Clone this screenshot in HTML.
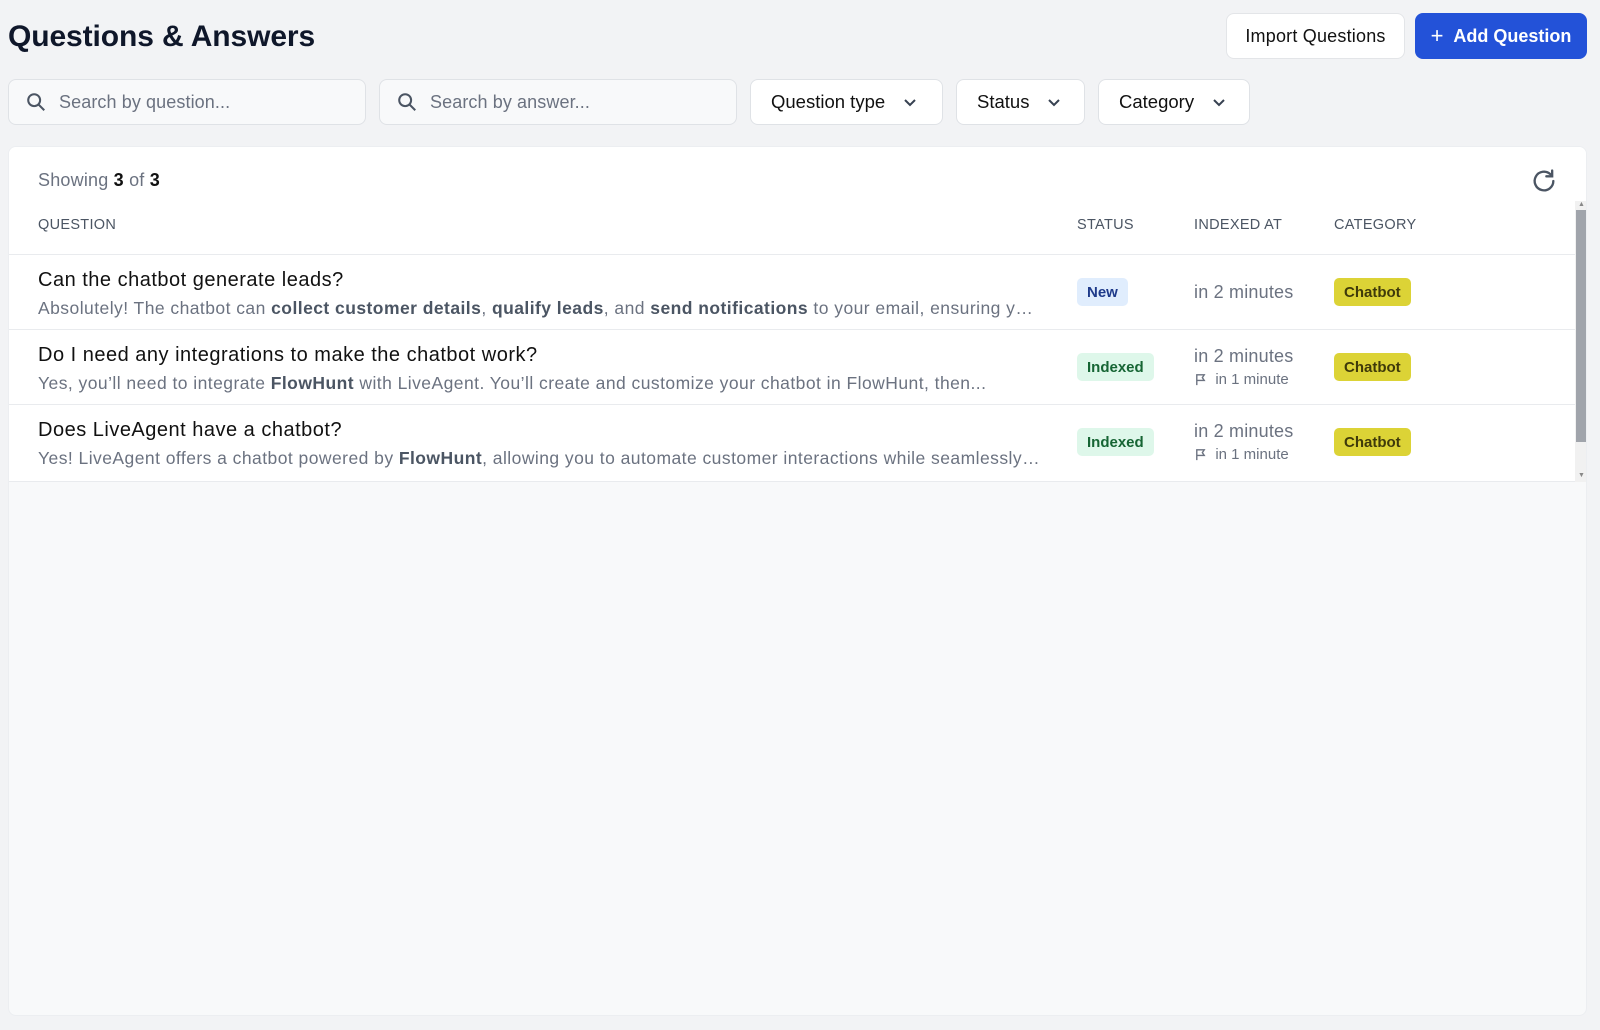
<!DOCTYPE html>
<html><head><meta charset="utf-8">
<style>
*{box-sizing:border-box;margin:0;padding:0}
body{width:1600px;height:1030px;background:#f2f3f5;font-family:"Liberation Sans",sans-serif;color:#111827;position:relative;overflow:hidden}
.abs{position:absolute}
h1{position:absolute;left:8px;top:20px;font-size:30px;font-weight:700;letter-spacing:-0.1px;color:#0f172a}
.btn{position:absolute;top:13px;height:46px;border-radius:8px;font-size:18px;display:flex;align-items:center;justify-content:center}
.imp{left:1226px;width:179px;background:#fff;border:1px solid #e3e5e8;color:#111;letter-spacing:0.2px}
.add{left:1415px;width:172px;background:#2352d8;color:#fff;font-weight:700}
.inp{position:absolute;top:79px;height:46px;border:1px solid #dfe2e6;border-radius:8px;background:#f8f9fa;display:flex;align-items:center;font-size:18px;color:#6b7280;letter-spacing:0.1px}
.inp svg{margin:0 12px 0 16px}
.dd{position:absolute;top:79px;height:46px;border:1px solid #dfe2e6;border-radius:8px;background:#fff;display:flex;align-items:center;padding-left:20px;font-size:18.5px;color:#111}
.dd svg{margin-left:18px}
.panel{position:absolute;left:8px;top:146px;width:1579px;height:870px;background:#f8f9fa;border-radius:8px;border:1px solid #eceef1;overflow:hidden}
.top{position:absolute;left:0;top:0;width:100%;height:335px;background:#fff}
.th{position:absolute;top:70px;font-size:14.5px;color:#4b5563;letter-spacing:0.3px}
.row{position:absolute;left:0;width:1567px;height:75px;border-top:1px solid #e9ebee}
.q{position:absolute;left:29px;top:14px;font-size:20px;letter-spacing:0.5px;color:#111}
.a{position:absolute;left:29px;top:43px;font-size:17.5px;letter-spacing:0.45px;color:#6b7280;white-space:nowrap;width:1003px;overflow:hidden;text-overflow:ellipsis}
.a b{color:#4b5563}
.badge{position:absolute;top:23px;height:28px;border-radius:5px;font-size:15px;font-weight:700;display:flex;align-items:center;padding:0 10px}
.new{left:1068px;background:#e0edfd;color:#1e3a8a}
.idx{left:1068px;background:#def7ea;color:#166534}
.cat{left:1325px;background:#dcd336;color:#3f3a0a}
.t1{position:absolute;left:1185px;font-size:18px;color:#6b7280;letter-spacing:0.2px}
.t2{position:absolute;left:1185px;font-size:15px;color:#6b7280;display:flex;align-items:center}
</style></head><body>
<h1>Questions &amp; Answers</h1>
<div class="btn imp">Import Questions</div>
<div class="btn add"><span style="font-weight:400;font-size:22px;margin-right:10px">+</span>Add Question</div>

<div class="inp" style="left:8px;width:358px"><svg width="22" height="22" viewBox="0 0 24 24" fill="none" stroke="#4b5563" stroke-width="2.2"><circle cx="10" cy="10" r="6.5"/><path d="M15 15l6 6"/></svg>Search by question...</div>
<div class="inp" style="left:379px;width:358px"><svg width="22" height="22" viewBox="0 0 24 24" fill="none" stroke="#4b5563" stroke-width="2.2"><circle cx="10" cy="10" r="6.5"/><path d="M15 15l6 6"/></svg>Search by answer...</div>
<div class="dd" style="left:750px;width:193px">Question type<svg width="14" height="14" viewBox="0 0 14 14" fill="none" stroke="#374151" stroke-width="2"><path d="M2 5l5 5 5-5"/></svg></div>
<div class="dd" style="left:956px;width:129px">Status<svg width="14" height="14" viewBox="0 0 14 14" fill="none" stroke="#374151" stroke-width="2"><path d="M2 5l5 5 5-5"/></svg></div>
<div class="dd" style="left:1098px;width:152px">Category<svg width="14" height="14" viewBox="0 0 14 14" fill="none" stroke="#374151" stroke-width="2"><path d="M2 5l5 5 5-5"/></svg></div>

<div class="panel">
 <div class="top"></div>
 <div class="abs" style="left:29px;top:23px;font-size:18px;color:#6b7280;letter-spacing:0.2px">Showing <b style="color:#111">3</b> of <b style="color:#111">3</b></div>
 <svg class="abs" style="left:1521px;top:20px" width="28" height="28" viewBox="0 0 24 24" fill="none" stroke="#4b5563" stroke-width="2" stroke-linecap="round"><path d="M20 12a8 8 0 1 1-2.4-5.7"/><path d="M19 3v5h-5"/></svg>
 <div class="th" style="left:29px">QUESTION</div>
 <div class="th" style="left:1068px">STATUS</div>
 <div class="th" style="left:1185px">INDEXED AT</div>
 <div class="th" style="left:1325px">CATEGORY</div>

 <div class="row" style="top:107px">
  <div class="q">Can the chatbot generate leads?</div>
  <div class="a">Absolutely! The chatbot can <b>collect customer details</b>, <b>qualify leads</b>, and <b>send notifications</b> to your email, ensuring you never miss a potential customer opportunity</div>
  <div class="badge new">New</div>
  <div class="t1" style="top:27px">in 2 minutes</div>
  <div class="badge cat">Chatbot</div>
 </div>
 <div class="row" style="top:182px">
  <div class="q">Do I need any integrations to make the chatbot work?</div>
  <div class="a">Yes, you’ll need to integrate <b>FlowHunt</b> with LiveAgent. You’ll create and customize your chatbot in FlowHunt, then...</div>
  <div class="badge idx">Indexed</div>
  <div class="t1" style="top:16px">in 2 minutes</div>
  <div class="t2" style="top:41px"><svg width="13" height="13" viewBox="0 0 14 14" fill="none" stroke="#6b7280" stroke-width="1.5"><path d="M3 13V2h8l-2 3 2 3H3"/></svg>&nbsp; in 1 minute</div>
  <div class="badge cat">Chatbot</div>
 </div>
 <div class="row" style="top:257px">
  <div class="q">Does LiveAgent have a chatbot?</div>
  <div class="a">Yes! LiveAgent offers a chatbot powered by <b>FlowHunt</b>, allowing you to automate customer interactions while seamlessly handing over</div>
  <div class="badge idx">Indexed</div>
  <div class="t1" style="top:16px">in 2 minutes</div>
  <div class="t2" style="top:41px"><svg width="13" height="13" viewBox="0 0 14 14" fill="none" stroke="#6b7280" stroke-width="1.5"><path d="M3 13V2h8l-2 3 2 3H3"/></svg>&nbsp; in 1 minute</div>
  <div class="badge cat">Chatbot</div>
 </div>
 <div class="abs" style="left:0;top:334px;width:1567px;border-top:1px solid #e9ebee"></div>
 <div class="abs" style="left:1566px;top:54px;width:12px;height:281px;background:#f1f1f1"></div>
 <div class="abs" style="left:1567px;top:63px;width:11px;height:232px;background:#a0a4ab"></div>
 <div class="abs" style="left:1569px;top:54px;font-size:7px;color:#888">▲</div>
 <div class="abs" style="left:1569px;top:325px;font-size:7px;color:#888">▼</div>
</div>
</body></html>
